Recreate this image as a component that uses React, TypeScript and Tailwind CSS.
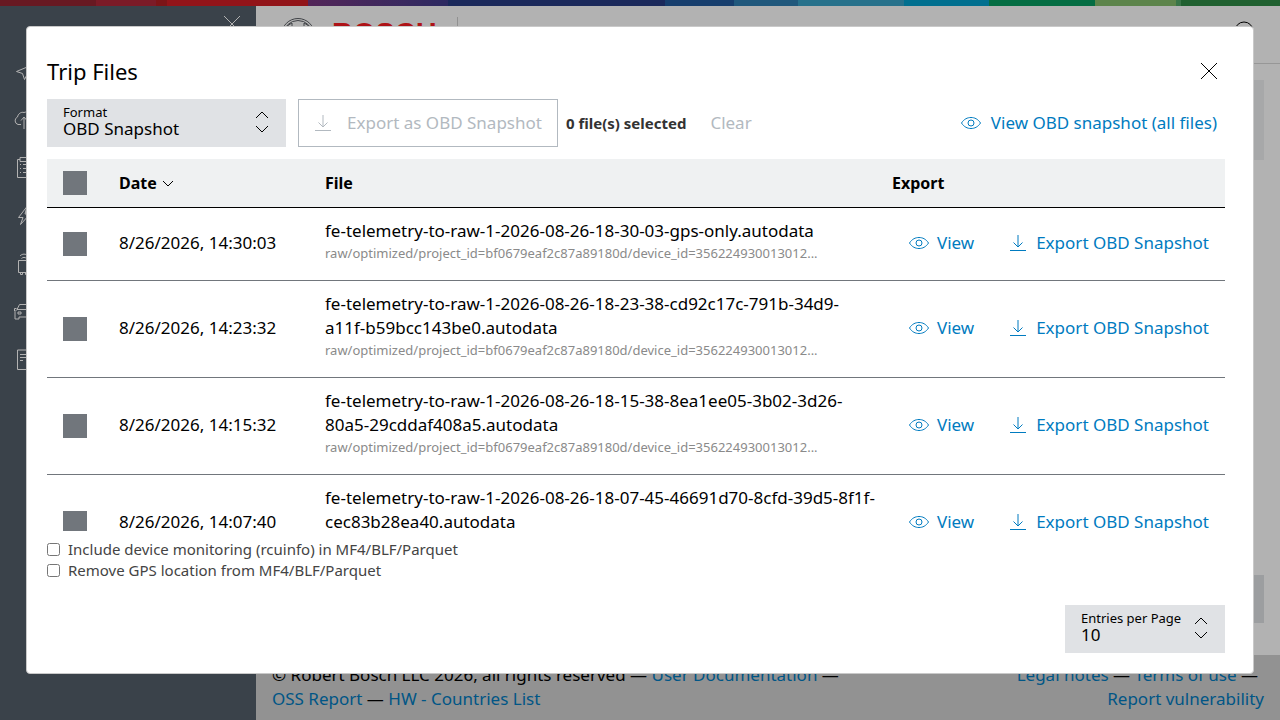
import { useId, useState } from 'react';
import type { ReactNode } from 'react';

type TripFile = { date: string; name: string };

const FILE_PATH = 'raw/optimized/project_id=bf0679eaf2c87a89180d/device_id=356224930013012...';

const FILES: TripFile[] = [
  { date: '8/26/2026, 14:30:03', name: 'fe-telemetry-to-raw-1-2026-08-26-18-30-03-gps-only.autodata' },
  { date: '8/26/2026, 14:23:32', name: 'fe-telemetry-to-raw-1-2026-08-26-18-23-38-cd92c17c-791b-34d9-a11f-b59bcc143be0.autodata' },
  { date: '8/26/2026, 14:15:32', name: 'fe-telemetry-to-raw-1-2026-08-26-18-15-38-8ea1ee05-3b02-3d26-80a5-29cddaf408a5.autodata' },
  { date: '8/26/2026, 14:07:40', name: 'fe-telemetry-to-raw-1-2026-08-26-18-07-45-46691d70-8cfd-39d5-8f1f-cec83b28ea40.autodata' },
];

const NAV = [
  { label: 'Trips', d: 'M4.5 11.5 20 5l-7.5 14.5-2-6z' },
  { label: 'Uploads', d: 'M9 16.5H6a4 4 0 0 1-.5-7.5C6 6 9 3.500 12 4.500c4-1.500 7 1 7.500 4a4 4 0 0 1-.5 8h-3M12 21V9M9 12.500 12 9l3 3.500' },
  { label: 'Reports', d: 'M8 3.500H5.500v18h13v-18H16M8 1.500h8v4H8zM8 8.500h1M11 8.500h5M8 12.500h1M11 12.500h5M8 16.500h1M11 16.500h5' },
  { label: 'Events', d: 'M15 2.500 6.500 13.500H11L8.500 20.500 18 10h-5z' },
  { label: 'Devices', d: 'M8 4c2-2.500 6-2.500 8 0M9.500 6.500c1.500-1.500 3.500-1.500 5 0M6.500 8.500h11v12h-11zM8.500 20.500v2h2v-2M13.500 20.500v2h2v-2' },
  { label: 'Vehicles', d: 'M5 9.500 7.500 4.500h9L19 9.500M4.500 8.500H2.500V11M5 9.500l-2 2v7.500h4v-2h10v2h4V11.500l-2-2zM6 12h3v2H6z' },
  { label: 'Documents', d: 'M5.500 2h13v19.500h-13zM8 6.500h8M8 9.500h8M8 12.500h3' },
];

const STRIPES = [
  'grow-[96] bg-[#962531]',
  'grow-[60] bg-[#b12839]',
  'grow-[11] bg-[#b21d22]',
  'grow-[141] bg-[#d21e24]',
  'grow-[140] bg-linear-to-r from-[#77367f] to-[#403b8c]',
  'grow-[217] bg-[#283b83]',
  'grow-[69] bg-[#215a9d]',
  'grow-[64] bg-[#2e7eb2]',
  'grow-[106] bg-[#39a2c8]',
  'grow-[85] bg-[#00a0cd]',
  'grow-[106] bg-[#079c61]',
  'grow-[81] bg-[#86be6c]',
  'grow-[5] bg-[#52a868]',
  'grow-[99] bg-[#2e8a45]',
];

export default function App() {
  return (
    <div className="flex min-h-screen flex-col bg-white font-['Noto_Sans',sans-serif] text-[17px] leading-6 text-black">
      <div className="flex h-1.5">
        {STRIPES.map((s) => (
          <div key={s} className={`basis-0 ${s}`} />
        ))}
      </div>
      <div className="flex grow">
        <Sidebar />
        <div className="flex min-w-0 grow flex-col">
          <Header />
          <main className="flex grow flex-col justify-between px-4 pt-4 pb-8">
            <div className="h-20 bg-[#eff1f2]" />
            <div className="h-12 bg-[#e0e2e5]" />
          </main>
          <Footer />
        </div>
      </div>
      <TripFilesDialog />
    </div>
  );
}

function Sidebar() {
  return (
    <nav className="w-64 shrink-0 bg-[#545f6b] text-white">
      <div className="flex h-[42px] justify-end px-4 pt-2.5">
        <button aria-label="Collapse navigation" className="size-4">
          <CloseIcon />
        </button>
      </div>
      {NAV.map((item) => (
        <a key={item.label} href="#" aria-label={item.label} className="flex h-12 items-center px-3">
          <svg viewBox="0 0 24 24" className="size-6 fill-none stroke-current stroke-1">
            <path d={item.d} />
          </svg>
        </a>
      ))}
    </nav>
  );
}

function Header() {
  return (
    <header className="flex h-[58px] items-center border-b border-[#d9d9d9] px-6">
      <svg viewBox="0 0 36 36" className="size-9 fill-none stroke-[#5c6066] stroke-1">
        <circle cx="18" cy="18" r="16.500" />
        <circle cx="18" cy="18" r="14.500" />
        <path d="M12 6v24M24 6v24M12 18h12M12 6a13 13 0 0 0 0 24M24 6a13 13 0 0 1 0 24" />
      </svg>
      <span className="ml-4 pb-1 font-['Liberation_Sans',sans-serif] text-[29px] font-bold text-[#f91b21]">BOSCH</span>
      <div className="ml-5 h-9 w-px bg-[#d0d0d0]" />
      <button aria-label="Search" className="ml-auto size-6">
        <svg viewBox="0 0 24 24" className="size-6 overflow-visible fill-none stroke-black">
          <circle cx="12" cy="8" r="9" />
          <path d="m6 15-5 6" />
        </svg>
      </button>
    </header>
  );
}

function Footer() {
  return (
    <footer className="flex justify-between bg-[#d1d1d1] px-4 pt-2 pb-[9px]">
      <div>
        <p>
          © Robert Bosch LLC 2026, all rights reserved — <FooterLink>User Documentation</FooterLink> —
        </p>
        <p>
          <FooterLink>OSS Report</FooterLink> — <FooterLink>HW - Countries List</FooterLink>
        </p>
      </div>
      <div className="text-right">
        <p className="pr-1.5">
          <FooterLink>Legal notes</FooterLink> — <FooterLink>Terms of use</FooterLink> —
        </p>
        <p>
          <FooterLink>Report vulnerability</FooterLink>
        </p>
      </div>
    </footer>
  );
}

function FooterLink({ children }: { children: ReactNode }) {
  return (
    <a href="#" className="text-[#007bc0]">
      {children}
    </a>
  );
}

function TripFilesDialog() {
  const [selected, setSelected] = useState<string[]>([]);

  const toggle = (date: string) =>
    setSelected((s) => (s.includes(date) ? s.filter((d) => d !== date) : [...s, date]));
  const toggleAll = () => setSelected((s) => (s.length === FILES.length ? [] : FILES.map((f) => f.date)));

  const none = selected.length === 0;

  return (
    <div className="fixed inset-0 flex bg-black/30 px-[26px] pt-[26px] pb-[46px]">
      <div
        role="dialog"
        aria-label="Trip Files"
        className="flex min-w-0 grow flex-col rounded border border-[#c9c9c9] bg-white pt-7 pr-7 pb-5 pl-5"
      >
        <div className="flex h-8 shrink-0 items-center justify-between pr-2">
          <h1 className="text-[22px]">Trip Files</h1>
          <button aria-label="Close" className="size-4">
            <CloseIcon />
          </button>
        </div>

        <div className="mt-3 flex h-12 shrink-0 items-center">
          <SelectBox label="Format" options={['OBD Snapshot', 'MF4', 'BLF', 'Parquet']} className="w-[239px]" />
          <button
            disabled={none}
            className="ml-3 flex h-12 w-[260px] items-center gap-3 border border-[#71767c] px-3 text-[#71767c] disabled:border-[#b2b9c0] disabled:text-[#b2b9c0]"
          >
            <DownloadIcon />
            Export as OBD Snapshot
          </button>
          <span className="ml-2 text-[15px] font-bold text-[#333]">{selected.length} file(s) selected</span>
          <button
            disabled={none}
            onClick={() => setSelected([])}
            className="ml-6 text-[#007bc0] disabled:text-[#b2b9c0]"
          >
            Clear
          </button>
          <a href="#" className="ml-auto flex items-center gap-2 pr-2 text-[#007bc0]">
            <EyeIcon />
            View OBD snapshot (all files)
          </a>
        </div>

        <div className="mt-3 min-h-0 grow basis-0 overflow-y-auto [scrollbar-width:none]">
          <table className="w-full table-fixed text-left">
            <thead>
              <tr className="h-12 border-b border-black bg-[#eff1f2] text-[16px]">
                <th className="w-14 pl-4">
                  <Tick label="Select all" checked={!none && selected.length === FILES.length} onChange={toggleAll} />
                </th>
                <th className="w-[206px] pl-4">
                  <button className="flex items-center gap-1 font-bold">
                    Date
                    <svg viewBox="0 0 14 14" className="size-3.5 fill-none stroke-current">
                      <path d="m2 5 5 5 5-5" />
                    </svg>
                  </button>
                </th>
                <th className="pl-4">File</th>
                <th className="w-[349px] pl-4">Export</th>
              </tr>
            </thead>
            <tbody>
              {FILES.map((f) => (
                <tr key={f.date} className="border-b border-[#71767c]">
                  <td className="pl-4">
                    <Tick label={`Select ${f.date}`} checked={selected.includes(f.date)} onChange={() => toggle(f.date)} />
                  </td>
                  <td className="pb-0.5 pl-4">{f.date}</td>
                  <td className="pt-[11px] pb-[17px] pl-4">
                    <div>{f.name}</div>
                    <div className="truncate text-[13px] leading-5 text-[#8a8a8a]">{FILE_PATH}</div>
                  </td>
                  <td className="pr-4 pb-0.5">
                    <div className="flex justify-end gap-8 text-[#007bc0]">
                      <button className="flex items-center gap-1.5">
                        <EyeIcon />
                        View
                      </button>
                      <button className="flex items-center gap-1.5">
                        <DownloadIcon />
                        Export OBD Snapshot
                      </button>
                    </div>
                  </td>
                </tr>
              ))}
            </tbody>
          </table>
        </div>

        <div className="mt-2 shrink-0 text-[15px] leading-[21px] text-[#444]">
          <label className="flex items-center gap-2">
            <input type="checkbox" />
            Include device monitoring (rcuinfo) in MF4/BLF/Parquet
          </label>
          <label className="flex items-center gap-2">
            <input type="checkbox" />
            Remove GPS location from MF4/BLF/Parquet
          </label>
        </div>

        <div className="mt-6 flex shrink-0 justify-end">
          <SelectBox label="Entries per Page" options={['10', '25', '50']} className="w-40" />
        </div>
      </div>
    </div>
  );
}

function SelectBox({ label, options, className }: { label: string; options: string[]; className: string }) {
  const id = useId();
  return (
    <div className={`flex h-12 items-center bg-[#e0e2e5] px-4 pb-0.5 ${className}`}>
      <div className="flex min-w-0 grow flex-col">
        <label htmlFor={id} className="text-[13px] leading-[14px] whitespace-nowrap">
          {label}
        </label>
        <select id={id} className="h-5 w-full appearance-none leading-5">
          {options.map((o) => (
            <option key={o}>{o}</option>
          ))}
        </select>
      </div>
      <svg viewBox="0 0 16 24" className="h-6 w-4 shrink-0 fill-none stroke-black">
        <path d="m2 8 6-6 6 6M2 16l6 6 6-6" />
      </svg>
    </div>
  );
}

function Tick({ label, checked, onChange }: { label: string; checked: boolean; onChange: () => void }) {
  return (
    <input
      type="checkbox"
      aria-label={label}
      checked={checked}
      onChange={onChange}
      className="block size-6 appearance-none bg-[#71767c] checked:bg-[#007bc0]"
    />
  );
}

function CloseIcon() {
  return (
    <svg viewBox="0 0 16 16" className="size-4 fill-none stroke-current">
      <path d="m0 0 16 16M16 0 0 16" />
    </svg>
  );
}

function DownloadIcon() {
  return (
    <svg viewBox="0 0 24 24" className="size-6 shrink-0 fill-none stroke-current">
      <path d="M4 19.500h16M12 4v12M7.500 11.500l4.500 4.500 4.500-4.500" />
    </svg>
  );
}

function EyeIcon() {
  return (
    <svg viewBox="0 0 24 24" className="size-6 shrink-0 fill-none stroke-current">
      <path d="M2.500 12C5 8 8.500 6.500 12 6.500S19 8 21.500 12C19 16 15.500 17.500 12 17.500S5 16 2.500 12z" />
      <circle cx="12" cy="12" r="3" />
    </svg>
  );
}
